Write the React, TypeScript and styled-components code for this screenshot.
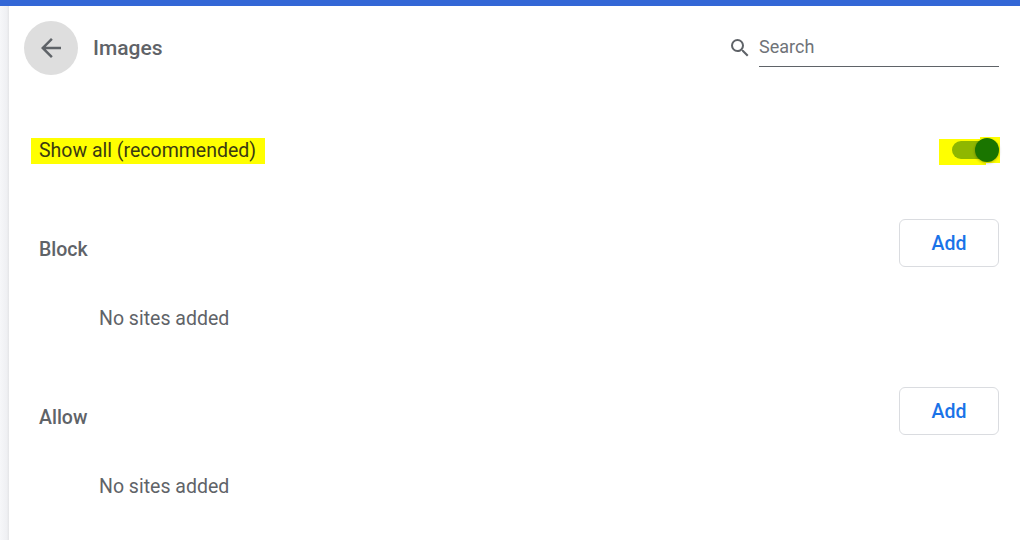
import styled, { createGlobalStyle } from 'styled-components';

const GlobalStyle = createGlobalStyle`
  html, body {
    margin: 0;
    padding: 0;
    background: #fff;
    font-family: Roboto, "Liberation Sans", sans-serif;
  }
`;

const Page = styled.div`
  width: 1020px;
  height: 540px;
  overflow: hidden;
  display: flex;
  flex-direction: column;
`;

const TopBar = styled.div`
  height: 6px;
  flex: none;
  background: #3367d6;
`;

const Body = styled.div`
  flex: 1;
  display: flex;
`;

const SideStrip = styled.div`
  width: 9px;
  flex: none;
  background: linear-gradient(to right, #f6f7f9, #eff0f3 75%, #e4e5e7);
`;

const Main = styled.main`
  flex: 1;
  padding: 15px 21px 0 15px;
  color: #5f6368;
`;

const Header = styled.header`
  height: 54px;
  display: flex;
  align-items: center;
`;

const BackButton = styled.button`
  width: 54px;
  height: 54px;
  padding: 0;
  border: 0;
  border-radius: 50%;
  background: #dedede;
  display: flex;
  align-items: center;
  justify-content: center;
  color: #5f6368;
`;

const Title = styled.h1`
  margin: 0 0 0 15px;
  font-size: 21px;
  font-weight: 500;
  line-height: 54px;
  flex: 1;
`;

const SearchIcon = styled.svg`
  width: 24px;
  height: 24px;
  flex: none;
  margin-right: 7px;
  fill: #5f6368;
`;

const SearchBox = styled.div`
  width: 240px;
  height: 38px;
  box-sizing: border-box;
  border-bottom: 1px solid #5f6368;
  font-size: 18px;
  line-height: 36px;
  color: #6f7378;
`;

const ToggleRow = styled.div`
  margin: 53px 0 0 15px;
  height: 44px;
  display: flex;
  align-items: center;
  justify-content: space-between;
`;

const Highlighted = styled.span`
  margin: 2px 0 0 -8px;
  padding: 0 9px 0 8px;
  height: 26px;
  line-height: 26px;
  background: #ffff00;
  font-size: 19.5px;
  color: #3a3a12;
`;

const Toggle = styled.div`
  width: 60px;
  height: 28px;
  margin-top: 2px;
  position: relative;

  &::before {
    content: '';
    position: absolute;
    left: 0;
    top: 2px;
    width: 47px;
    height: 26px;
    background: #ffff00;
  }

  &::after {
    content: '';
    position: absolute;
    right: -1px;
    top: 0;
    width: 20px;
    height: 26px;
    background: #ffff00;
  }
`;

const Track = styled.div`
  position: absolute;
  left: 13px;
  top: 4px;
  width: 38px;
  height: 18px;
  border-radius: 9px;
  background: #8fb700;
  z-index: 1;
`;

const Knob = styled.div`
  position: absolute;
  right: 0;
  top: 1px;
  width: 24px;
  height: 24px;
  border-radius: 50%;
  background: #1a7500;
  box-shadow: 0 1px 3px rgba(0, 0, 0, 0.3);
  z-index: 2;
`;

const Section = styled.section<{ $gap: number }>`
  margin: ${(p) => p.$gap}px 0 0 15px;
`;

const SectionHead = styled.div`
  height: 48px;
  display: flex;
  align-items: center;
  justify-content: space-between;
`;

const SectionTitle = styled.h2`
  margin: 12px 0 0;
  font-size: 19.5px;
  font-weight: 500;
`;

const AddButton = styled.button`
  width: 100px;
  height: 48px;
  box-sizing: border-box;
  background: #fff;
  border: 1px solid #dadce0;
  border-radius: 6px;
  color: #1a73e8;
  font-family: inherit;
  font-size: 19.5px;
  font-weight: 500;
`;

const Empty = styled.div`
  margin: 40px 0 0 60px;
  font-size: 19.5px;
  line-height: 24px;
`;

const lists = [
  { title: 'Block', gap: 47 },
  { title: 'Allow', gap: 56 },
];

export default function App() {
  return (
    <Page>
      <GlobalStyle />
      <TopBar />
      <Body>
        <SideStrip />
        <Main>
          <Header>
            <BackButton aria-label="Back">
              <svg width="30" height="30" viewBox="0 0 24 24" fill="currentColor">
                <path d="M20 11H7.83l5.59-5.59L12 4l-8 8 8 8 1.41-1.41L7.83 13H20v-2z" />
              </svg>
            </BackButton>
            <Title>Images</Title>
            <SearchIcon viewBox="0 0 24 24">
              <path d="M15.5 14h-.79l-.28-.27A6.47 6.47 0 0 0 16 9.5 6.5 6.5 0 1 0 9.5 16c1.61 0 3.09-.59 4.23-1.57l.27.28v.79l5 4.99L20.49 19l-4.99-5zm-6 0C7.01 14 5 11.99 5 9.5S7.01 5 9.5 5 14 7.01 14 9.5 11.99 14 9.5 14z" />
            </SearchIcon>
            <SearchBox>Search</SearchBox>
          </Header>
          <ToggleRow>
            <Highlighted>Show all (recommended)</Highlighted>
            <Toggle>
              <Track />
              <Knob />
            </Toggle>
          </ToggleRow>
          {lists.map((l) => (
            <Section key={l.title} $gap={l.gap}>
              <SectionHead>
                <SectionTitle>{l.title}</SectionTitle>
                <AddButton>Add</AddButton>
              </SectionHead>
              <Empty>No sites added</Empty>
            </Section>
          ))}
        </Main>
      </Body>
    </Page>
  );
}
